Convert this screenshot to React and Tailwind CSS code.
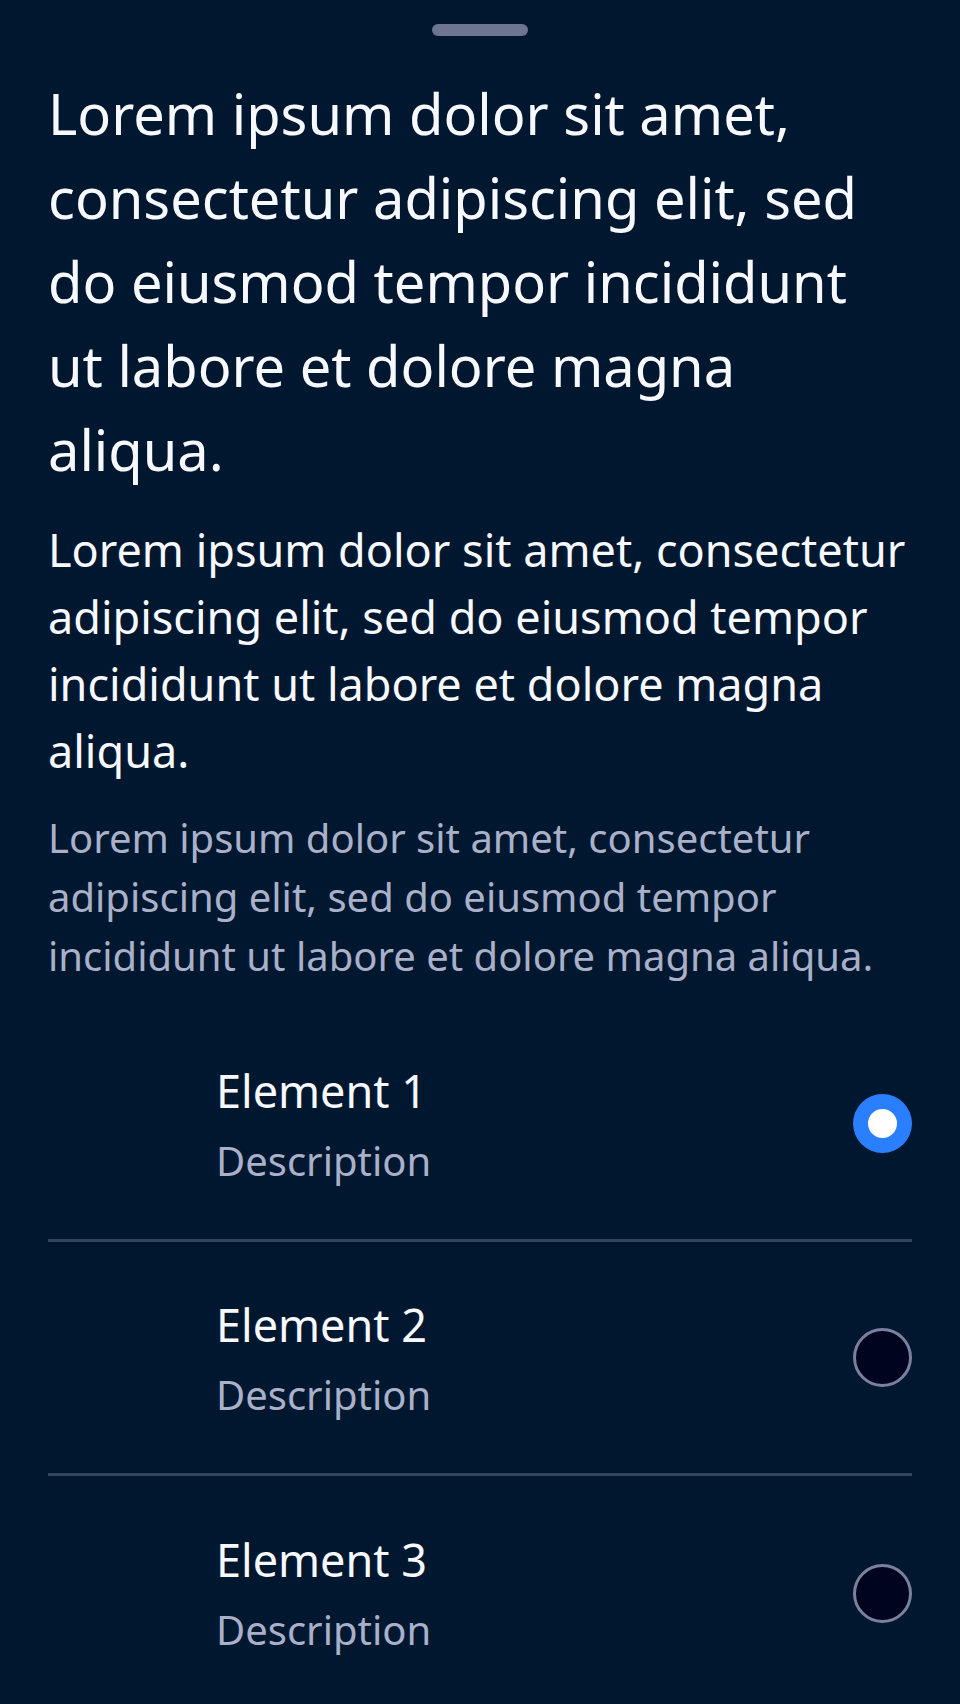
import React, { useState } from 'react';

const items = [
    { id: 1, title: 'Element 1', desc: 'Description' },
    { id: 2, title: 'Element 2', desc: 'Description' },
    { id: 3, title: 'Element 3', desc: 'Description' },
];

const lorem = 'Lorem ipsum dolor sit amet, consectetur adipiscing elit, sed do eiusmod tempor incididunt ut labore et dolore magna aliqua.';

const Radio = ({ checked }) => {
    if (checked) {
        return (
            <div className="w-[59px] h-[59px] rounded-full bg-[#2a7fff] flex items-center justify-center">
                <div className="w-[29px] h-[29px] rounded-full bg-white"></div>
            </div>
        );
    }
    return <div className="w-[59px] h-[59px] rounded-full border-[3px] border-[#7b819d] bg-[#00041f]"></div>;
};

const App = () => {
    const [selected, setSelected] = useState(1);

    return (
        <div className="min-h-[1704px] bg-[#001730] text-[#f8f9ff] font-['Noto_Sans',sans-serif] px-12">
            <div className="flex justify-center pt-6">
                <div className="w-24 h-3 rounded-full bg-[#6e7591]"></div>
            </div>
            <h1 className="mt-[35px] text-[56px] leading-[84px] font-normal">{lorem}</h1>
            <p className="mt-[25px] text-[45px] leading-[67px]">{lorem}</p>
            <p className="mt-6 text-[40px] leading-[59px] text-[#a9b0c8]">{lorem}</p>
            <div className="mt-[23px]">
                {items.map((item, i) => (
                    <div
                        key={item.id}
                        onClick={() => setSelected(item.id)}
                        className={'flex items-center h-[234px] pl-[168px] ' + (i < items.length - 1 ? 'border-b-[3px] border-[#33455c]' : '')}
                    >
                        <div className="flex-1">
                            <div className="text-[45px] leading-[64px]">{item.title}</div>
                            <div className="mt-[10px] text-[40px] leading-[56px] text-[#a9b0c8]">{item.desc}</div>
                        </div>
                        <Radio checked={selected === item.id} />
                    </div>
                ))}
            </div>
        </div>
    );
};

export default App;
